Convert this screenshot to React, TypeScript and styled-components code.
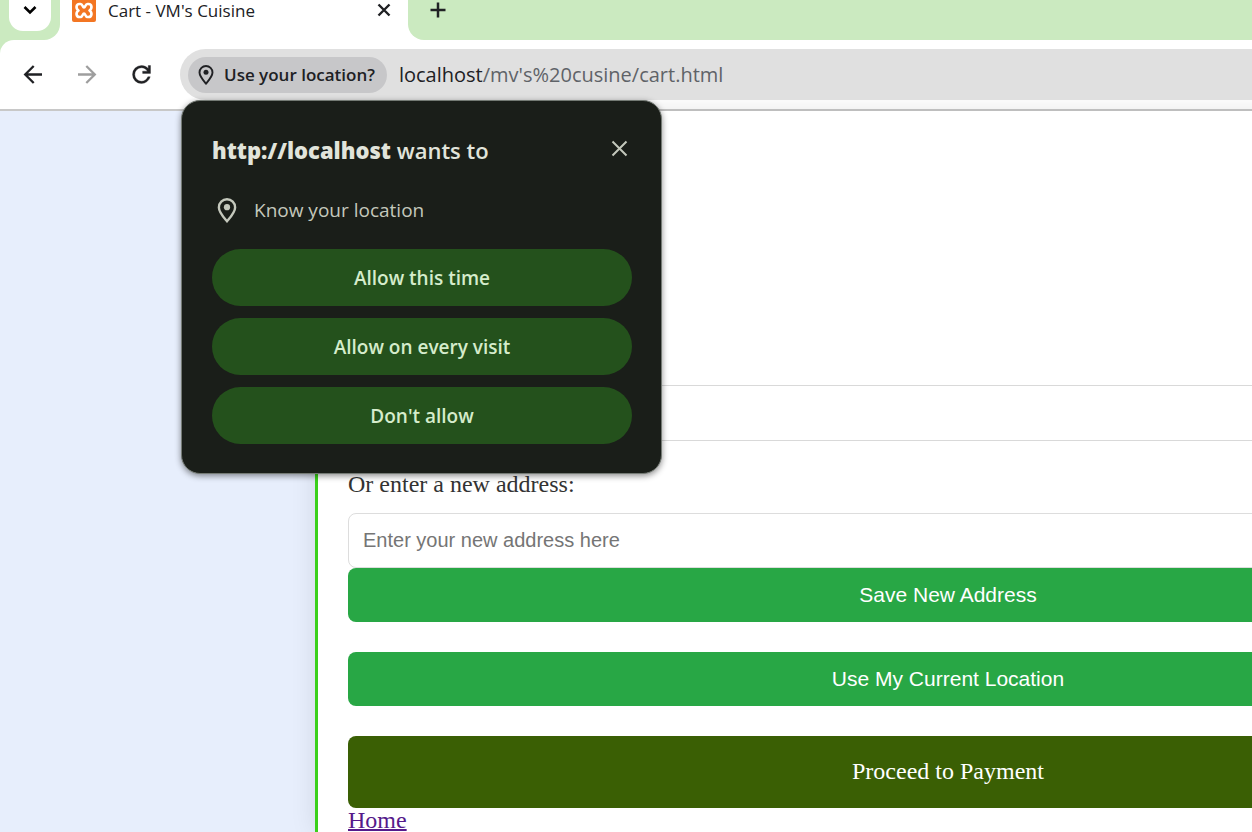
import React from 'react';
import styled, { createGlobalStyle } from 'styled-components';

const uiFont = '"Open Sans", "Noto Sans", sans-serif';

const GlobalStyle = createGlobalStyle`
  *, *::before, *::after { box-sizing: border-box; }
  html, body, #root { height: 100%; }
  body { margin: 0; overflow: hidden; background: #e7eefc; }
  button { border: 0; padding: 0; cursor: pointer; }
  svg { flex: none; }
`;

const Browser = styled.div`
  display: flex;
  flex-direction: column;
  min-height: 100%;
  overflow: hidden;
  font-family: ${uiFont};
  color: #202124;
`;

const TabStrip = styled.header`
  display: flex;
  height: 40px;
  background: #ffffff;
`;

const StripStart = styled.div`
  flex: 0 0 60px;
  padding: 0 9px 9px;
  background: #cbeac0;
  border-bottom-right-radius: 16px;
`;

const TabSearch = styled.button`
  display: grid;
  place-items: center;
  width: 42px;
  height: 31px;
  padding-bottom: 11px;
  background: #ffffff;
  border-radius: 0 0 14px 14px;
`;

const Tab = styled.div`
  display: flex;
  flex: 0 0 348px;
  align-items: center;
  gap: 12px;
  padding: 0 16px 20px 12px;
  font-size: 17px;
  line-height: 22px;
`;

const TabTitle = styled.span`
  flex: 1;
  padding-top: 2px;
  white-space: nowrap;
`;

const StripEnd = styled.div`
  flex: 1;
  padding: 0 20px 20px;
  background: #cbeac0;
  border-bottom-left-radius: 16px;
`;

const IconButton = styled.button`
  display: grid;
  place-items: center;
  flex: none;
  background: transparent;
  color: inherit;
`;

const ToolbarArea = styled.div`
  background: #cbeac0;
`;

const Toolbar = styled.nav`
  display: flex;
  align-items: center;
  height: 71px;
  padding-left: 20px;
  background: #ffffff;
  border-bottom: 2px solid #c8c8c8;
  border-top-left-radius: 14px;
`;

const NavButtons = styled.div`
  display: flex;
  gap: 27px;
  width: 160px;
`;

const AddressBar = styled.div`
  position: relative;
  display: flex;
  flex: 1;
  align-items: center;
  gap: 12px;
  height: 51px;
  padding: 1px 0 0 8px;
  background: #e0e0e0;
  border-radius: 26px 0 0 26px;
`;

const LocationChip = styled.button`
  display: flex;
  align-items: center;
  gap: 10px;
  height: 36px;
  padding: 0 12px 0 10px;
  border-radius: 18px;
  background: #c7c7c9;
  color: #202124;
  font: 600 17px/24px ${uiFont};
  white-space: nowrap;
`;

const Url = styled.span`
  font-size: 20px;
  line-height: 28px;
  color: #202124;
  white-space: nowrap;
`;

const UrlPath = styled.span`
  color: #5f6368;
`;

const Popup = styled.section`
  position: absolute;
  top: 51px;
  left: 1px;
  z-index: 1;
  width: 481px;
  padding: 32px 29px 29px 30px;
  border: 1px solid #747a74;
  border-radius: 19px;
  background: #1a1e19;
  box-shadow: 0 2px 6px rgba(0, 0, 0, 0.45);
  color: #e1e4db;
`;

const PopupHeader = styled.div`
  display: flex;
  align-items: flex-start;
  justify-content: space-between;
`;

const PopupTitle = styled.h2`
  margin: 0;
  font-size: 22px;
  font-weight: 600;
  line-height: 34px;
`;

const Origin = styled.span`
  font-weight: 800;
`;

const CloseButton = styled(IconButton)`
  width: 25px;
  height: 31px;
  color: #c4c8bc;
`;

const Permission = styled.p`
  display: flex;
  align-items: center;
  gap: 17px;
  margin: 29px 0 25px 5px;
  color: #c4c8bc;
  font-size: 19px;
  line-height: 28px;
`;

const Choices = styled.div`
  display: flex;
  flex-direction: column;
  gap: 12px;
`;

const Choice = styled.button`
  height: 57px;
  border-radius: 29px;
  background: #24511c;
  color: #d5eccb;
  font: 600 19px/28px ${uiFont};
`;

const Page = styled.main`
  flex: 1;
  padding-left: 315px;
  background: #e7eefc;
  font-family: "Liberation Serif", serif;
`;

const CartCard = styled.form`
  width: calc(100vw + 14px);
  min-height: 100%;
  padding: 274px 30px 0;
  border: 3px solid #3ad01a;
  border-width: 0 3px;
  background: #ffffff;
  box-shadow: 0 0 24px rgba(0, 0, 0, 0.1);
`;

const SavedAddress = styled.div`
  height: 56px;
  border: 1px solid #d9d9d9;
  border-radius: 8px;
`;

const AddressLabel = styled.label`
  display: block;
  margin: 29px 0 15px;
  color: #333333;
  font-size: 24px;
  line-height: 28px;
`;

const AddressInput = styled.input`
  display: block;
  width: 100%;
  height: 55px;
  padding: 0 14px;
  border: 1px solid #dddddd;
  border-radius: 8px;
  font: 20px "Liberation Sans", sans-serif;

  &::placeholder {
    color: #757575;
  }
`;

const ActionButton = styled.button`
  display: block;
  width: 100%;
  height: 54px;
  margin-bottom: 30px;
  border-radius: 8px;
  background: #28a745;
  color: #ffffff;
  font: 21px "Liberation Sans", sans-serif;
`;

const PayButton = styled(ActionButton)`
  height: 72px;
  margin-bottom: 0;
  padding-bottom: 2px;
  background: #3a5f04;
  font: 24px "Liberation Serif", serif;
`;

const HomeLink = styled.a`
  display: block;
  width: fit-content;
  color: #551a8b;
  font-size: 24px;
  line-height: 24px;
  text-decoration-thickness: 2px;
  text-underline-offset: 1px;
`;

type StrokeProps = { d: string; size: number; width?: number; color?: string };

const Stroke = ({ d, size, width = 2, color = 'currentColor' }: StrokeProps) => (
  <svg width={size} height={size} viewBox={`0 0 ${size} ${size}`} fill="none" stroke={color} strokeWidth={width} aria-hidden="true">
    <path d={d} />
  </svg>
);

const ReloadIcon = () => (
  <svg width="27" height="27" viewBox="0 0 24 24" fill="currentColor" stroke="currentColor" strokeWidth="0.3" aria-hidden="true">
    <path d="M12 20q-3.350 0-5.675-2.325T4 12t2.325-5.675T12 4q1.725 0 3.300.712T18 6.750V4h2v7h-7V9h4.200q-.8-1.400-2.188-2.200T12 6Q9.500 6 7.750 7.750T6 12t1.750 4.250T12 18q1.925 0 3.475-1.100T17.650 14h2.100q-.7 2.650-2.850 4.325T12 20Z" />
  </svg>
);

const Pin = ({ width, height }: { width: number; height: number }) => (
  <svg width={width} height={height} viewBox="0 0 18 24" fill="none" aria-hidden="true">
    <path d="M9 22.300C5 17.600 1.200 13.500 1.200 9a7.800 7.800 0 0 1 15.600 0c0 4.500-3.800 8.600-7.800 13.300Z" stroke="currentColor" strokeWidth="2.300" />
    <circle cx="9" cy="8.800" r="3" fill="currentColor" />
  </svg>
);

const Favicon = () => (
  <svg width="24" height="24" viewBox="0 0 24 24" aria-hidden="true">
    <rect width="24" height="24" rx="2" fill="#f37623" />
    <path
      d="M12 9.500C10.500 9.500 10.800 6 8.500 6H7.500C4 6 3.500 10.500 6.500 12.500 3.500 14.500 4 19 7.500 19H8.500C10.800 19 10.500 15.500 12 15.500 13.500 15.500 13.200 19 15.500 19H16.500C20 19 20.500 14.500 17.500 12.500 20.500 10.500 20 6 16.500 6H15.500C13.200 6 13.500 9.500 12 9.500Z"
      fill="none"
      stroke="#fff"
      strokeWidth="2.600"
      strokeLinejoin="round"
    />
  </svg>
);

export default function App() {
  return (
    <>
      <GlobalStyle />
      <Browser>
        <TabStrip>
          <StripStart>
            <TabSearch aria-label="Search tabs">
              <Stroke size={14} width={2.6} d="M1.500 4 7 9.500 12.500 4" />
            </TabSearch>
          </StripStart>
          <Tab>
            <Favicon />
            <TabTitle>Cart - VM's Cuisine</TabTitle>
            <IconButton aria-label="Close tab">
              <Stroke size={16} width={2.4} d="M2.500 2.500l11 11M13.500 2.500l-11 11" />
            </IconButton>
          </Tab>
          <StripEnd>
            <IconButton aria-label="New tab">
              <Stroke size={20} width={2.5} d="M10 2.500v15M2.500 10h15" />
            </IconButton>
          </StripEnd>
        </TabStrip>
        <ToolbarArea>
          <Toolbar>
            <NavButtons>
              <IconButton aria-label="Back">
                <Stroke size={27} width={2.3} d="M22 13.500H5.500M13.700 5 5.200 13.500l8.500 8.500" />
              </IconButton>
              <IconButton aria-label="Forward">
                <Stroke size={27} width={2.3} color="#9e9e9e" d="M4 13.500h16.500M12.300 5l8.500 8.500-8.500 8.500" />
              </IconButton>
              <IconButton aria-label="Reload">
                <ReloadIcon />
              </IconButton>
            </NavButtons>
            <AddressBar>
              <LocationChip>
                <Pin width={16} height={20} />
                Use your location?
              </LocationChip>
              <Url>
                localhost<UrlPath>/mv's%20cusine/cart.html</UrlPath>
              </Url>
              <Popup role="dialog" aria-labelledby="permission-title">
                <PopupHeader>
                  <PopupTitle id="permission-title">
                    <Origin>http://localhost</Origin> wants to
                  </PopupTitle>
                  <CloseButton aria-label="Close">
                    <Stroke size={19} width={2} d="M2.500 2.500l14 14M16.500 2.500l-14 14" />
                  </CloseButton>
                </PopupHeader>
                <Permission>
                  <Pin width={20} height={25} />
                  Know your location
                </Permission>
                <Choices>
                  <Choice>Allow this time</Choice>
                  <Choice>Allow on every visit</Choice>
                  <Choice>Don't allow</Choice>
                </Choices>
              </Popup>
            </AddressBar>
          </Toolbar>
        </ToolbarArea>
        <Page>
          <CartCard>
            <SavedAddress />
            <AddressLabel htmlFor="new-address">Or enter a new address:</AddressLabel>
            <AddressInput id="new-address" placeholder="Enter your new address here" />
            <ActionButton type="button">Save New Address</ActionButton>
            <ActionButton type="button">Use My Current Location</ActionButton>
            <PayButton type="button">Proceed to Payment</PayButton>
            <HomeLink href="#home">Home</HomeLink>
          </CartCard>
        </Page>
      </Browser>
    </>
  );
}
